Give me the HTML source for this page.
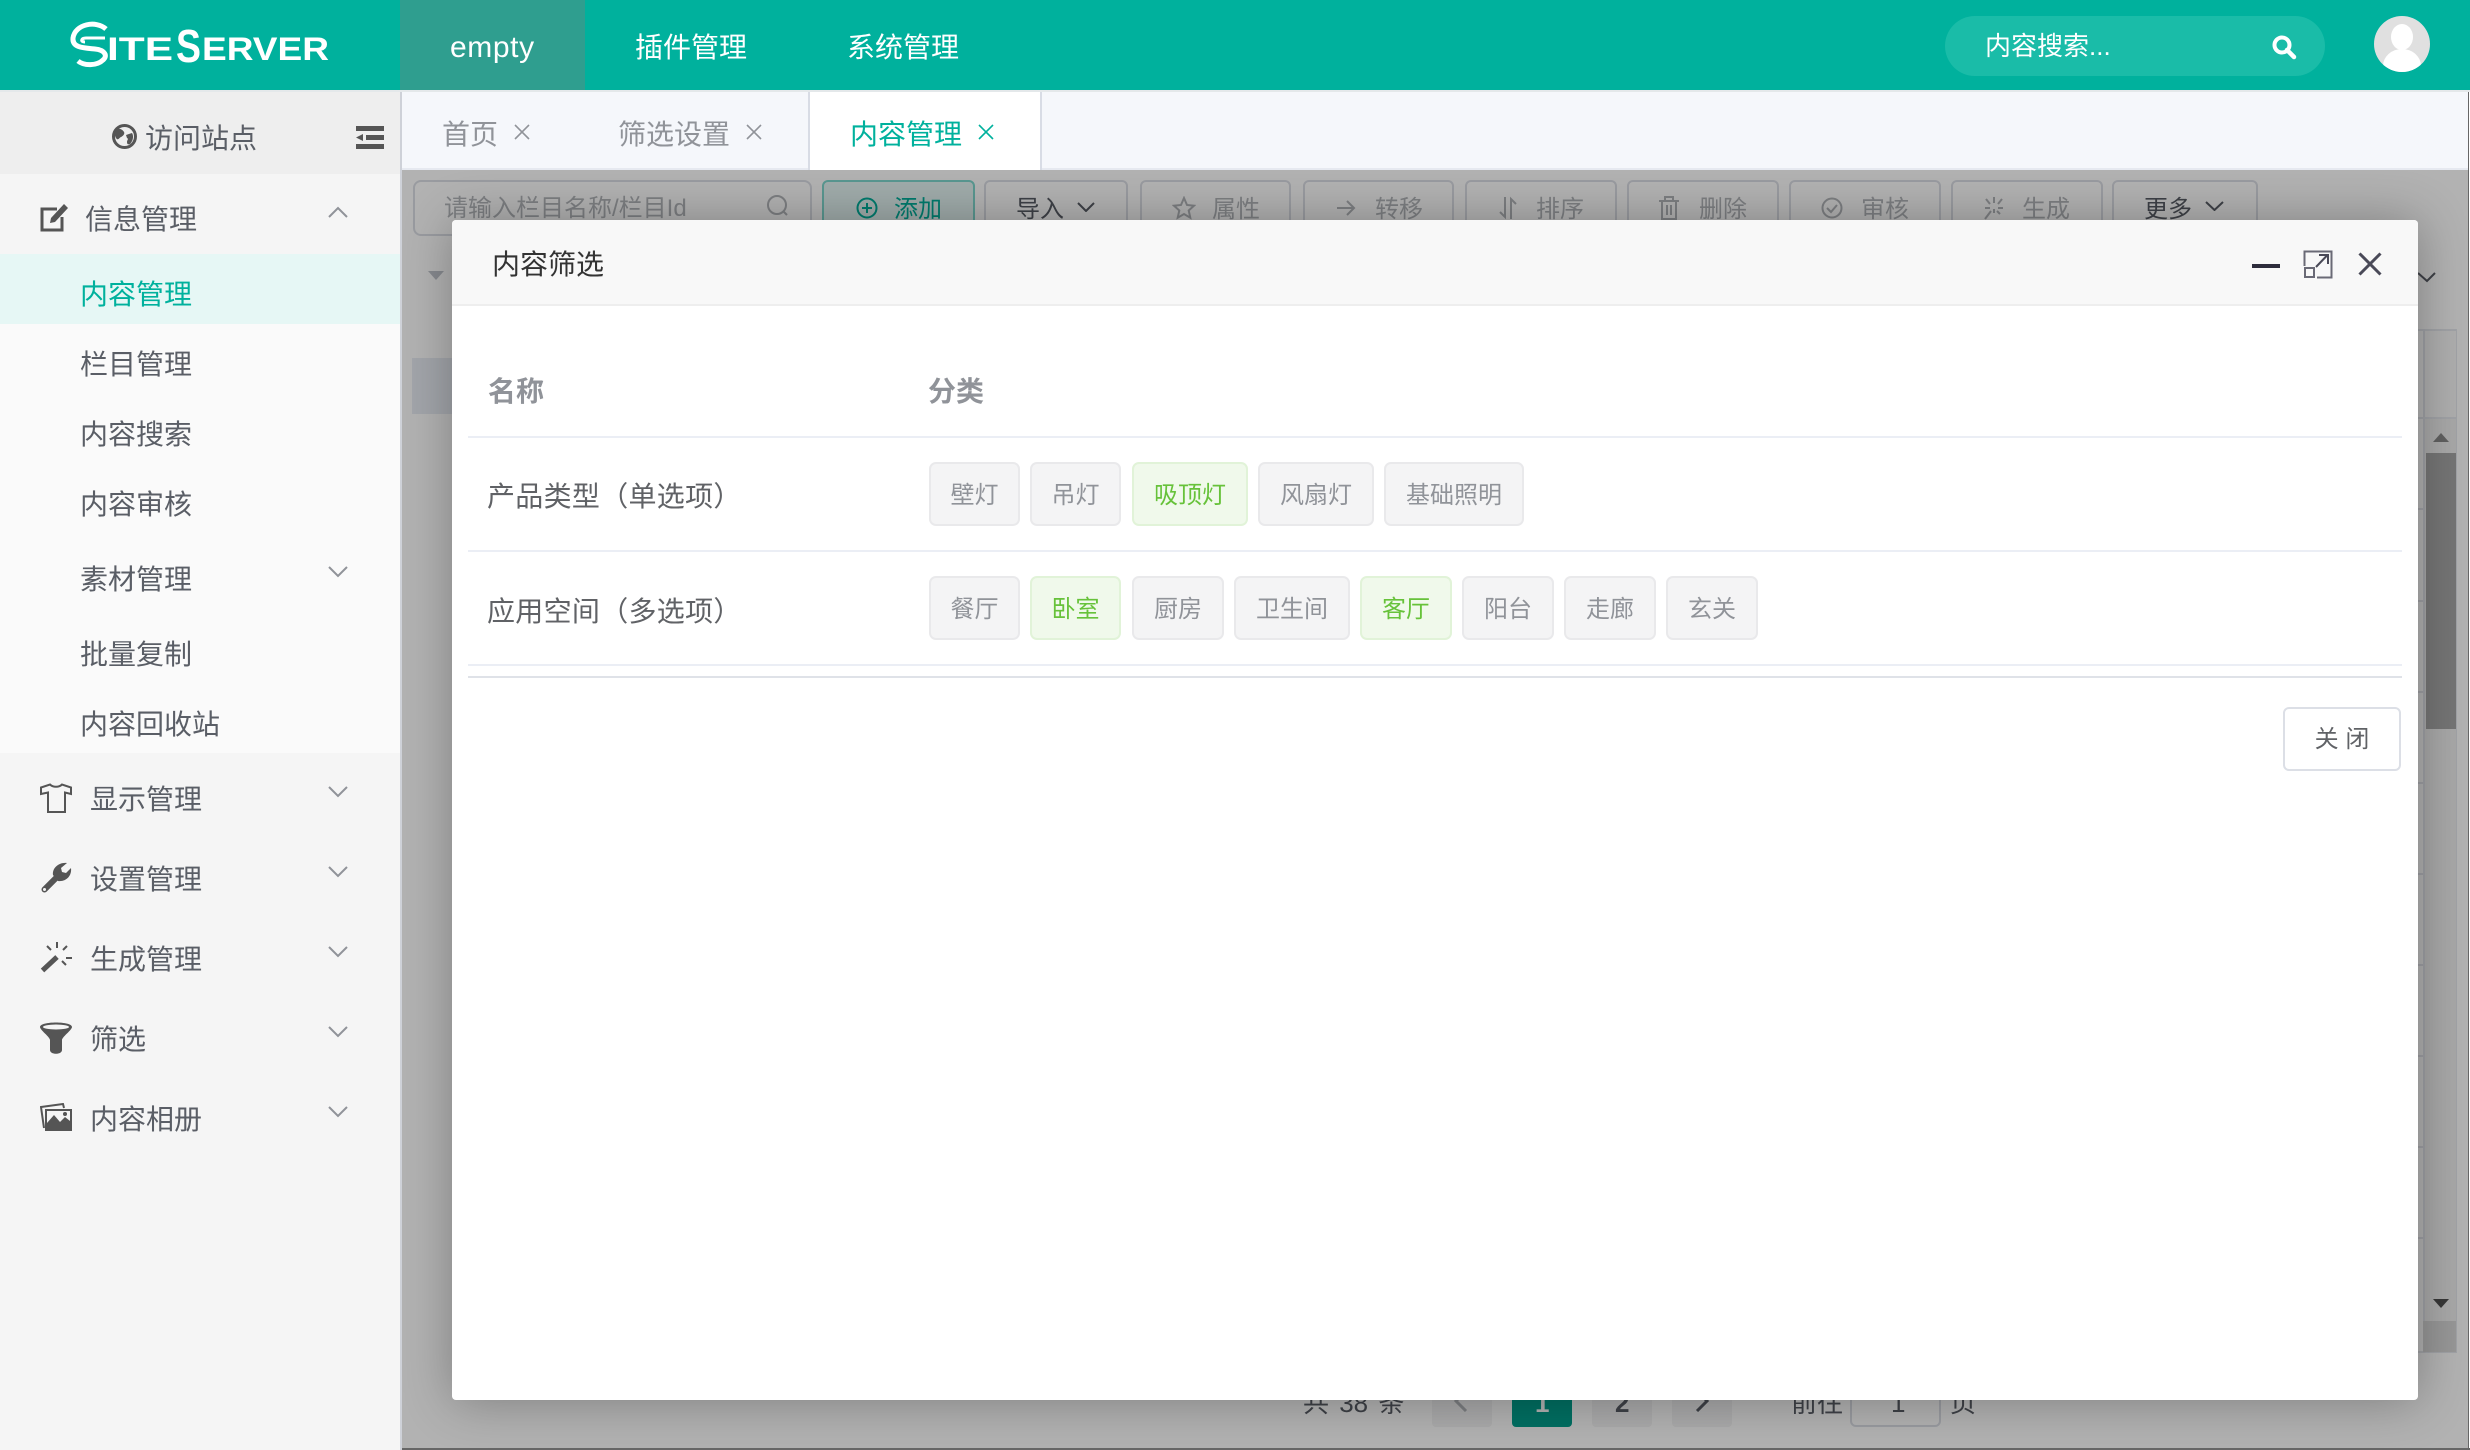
<!DOCTYPE html>
<html lang="zh">
<head>
<meta charset="utf-8">
<title>SiteServer</title>
<style>
html,body{margin:0;padding:0;width:2470px;height:1450px;overflow:hidden;background:#fff}
body{position:relative;font-family:"Liberation Sans","Noto Sans CJK SC",sans-serif;color:#5a5e66}
.b,.t,svg{position:absolute}
.b{box-sizing:border-box}
.t{white-space:nowrap;line-height:40px;font-size:28px;margin-top:2px}
.c{stroke:#909399;stroke-width:2;fill:none}
.tag{position:absolute;box-sizing:border-box;height:64px;background:#f4f4f5;border:2px solid #e9e9eb;border-radius:7px;color:#909399;font-size:24px;line-height:63px;text-align:center}
.tag.on{background:#f0f9eb;border-color:#e1f3d8;color:#67c23a}
.btn{position:absolute;box-sizing:border-box;top:180px;height:60px;border:2px solid #dcdfe6;border-radius:6px;background:#fff}
.s{font-size:24px;color:#b4b6bb}
</style>
</head>
<body>
<!-- underlying iframe content -->
<div class="b" style="left:0;top:0;width:2470px;height:1450px;clip-path:inset(170px 2px 2px 402px);background:#fff">
  <div class="b" style="left:413px;top:180px;width:399px;height:56px;border:2px solid #dcdfe6;border-radius:8px"></div>
  <div class="t" style="left:444px;top:187px;font-size:24px;color:#b4b6bb">请输入栏目名称/栏目Id</div>
  <svg style="left:766px;top:194px" width="24" height="24" viewBox="0 0 24 24"><circle cx="11" cy="11" r="9" fill="none" stroke="#b4b6bb" stroke-width="2"/><path d="M17 17l4 4" stroke="#b4b6bb" stroke-width="2"/></svg>
  <div class="btn" style="left:822px;width:153px;background:#e6f7f5;border-color:#80d8ce"></div>
  <svg style="left:856px;top:197px" width="22" height="22" viewBox="0 0 22 22"><circle cx="11" cy="11" r="9.500" fill="none" stroke="#00b19d" stroke-width="2"/><path d="M11 6v10M6 11h10" stroke="#00b19d" stroke-width="2"/></svg>
  <div class="t" style="left:894px;top:188px;font-size:24px;color:#00b19d">添加</div>
  <div class="btn" style="left:984px;width:144px"></div>
  <div class="t" style="left:1016px;top:188px;font-size:24px;color:#5a5e66">导入</div>
  <svg style="left:1077px;top:202px" width="18" height="10" viewBox="0 0 18 10"><path d="M1 1l8 8 8-8" fill="none" stroke="#5a5e66" stroke-width="2"/></svg>
  <div class="btn" style="left:1140px;width:151px"></div>
  <svg style="left:1172px;top:196px" width="24" height="24" viewBox="0 0 24 24"><path d="M12 2l3 7 7 .7-5.300 4.800 1.600 7.200L12 18l-6.300 3.700 1.600-7.200L2 9.700 9 9z" fill="none" stroke="#b4b6bb" stroke-width="2"/></svg>
  <div class="t s" style="left:1212px;top:188px">属性</div>
  <div class="btn" style="left:1303px;width:151px"></div>
  <svg style="left:1336px;top:198px" width="20" height="20" viewBox="0 0 20 20"><path d="M1 10h17M11 3l7 7-7 7" fill="none" stroke="#b4b6bb" stroke-width="2"/></svg>
  <div class="t s" style="left:1375px;top:188px">转移</div>
  <div class="btn" style="left:1465px;width:152px"></div>
  <svg style="left:1498px;top:196px" width="20" height="24" viewBox="0 0 20 24"><path d="M7 1v20L2 16M13 23V3l5 5" fill="none" stroke="#b4b6bb" stroke-width="2"/></svg>
  <div class="t s" style="left:1536px;top:188px">排序</div>
  <div class="btn" style="left:1627px;width:152px"></div>
  <svg style="left:1659px;top:196px" width="20" height="24" viewBox="0 0 20 24"><path d="M0 5h20M6 5V1h8v4M3 5v18h14V5M8 9v10M12 9v10" fill="none" stroke="#b4b6bb" stroke-width="2"/></svg>
  <div class="t s" style="left:1699px;top:188px">删除</div>
  <div class="btn" style="left:1789px;width:152px"></div>
  <svg style="left:1821px;top:197px" width="22" height="22" viewBox="0 0 22 22"><circle cx="11" cy="11" r="9.500" fill="none" stroke="#b4b6bb" stroke-width="2"/><path d="M6 11l4 4 6-7" fill="none" stroke="#b4b6bb" stroke-width="2"/></svg>
  <div class="t s" style="left:1861px;top:188px">审核</div>
  <div class="btn" style="left:1951px;width:152px"></div>
  <svg style="left:1983px;top:196px" width="22" height="24" viewBox="0 0 22 24"><path d="M11 1v6M11 13v4M3 3l4 5M19 3l-4 5M2 12h5M15 12h5M2 23l6-8M14 15l3 3" fill="none" stroke="#b4b6bb" stroke-width="2"/></svg>
  <div class="t s" style="left:2022px;top:188px">生成</div>
  <div class="btn" style="left:2112px;width:146px"></div>
  <div class="t" style="left:2144px;top:188px;font-size:24px;color:#5a5e66">更多</div>
  <svg style="left:2205px;top:201px" width="19" height="10" viewBox="0 0 19 10"><path d="M1 1l8.500 8 8.500-8" fill="none" stroke="#5a5e66" stroke-width="2"/></svg>

  <svg style="left:428px;top:271px" width="16" height="9" viewBox="0 0 16 9"><path d="M0 0h16L8 9z" fill="#c0c4cc"/></svg>
  <svg style="left:2418px;top:272px" width="18" height="11" viewBox="0 0 18 11"><path d="M0 1l9 8 8-8" fill="none" stroke="#5a5e66" stroke-width="2"/></svg>
  <div class="b" style="left:412px;top:358px;width:60px;height:56px;background:#e8ecf4"></div>

  <!-- table at right -->
  <div class="b" style="left:2400px;top:329px;width:57px;height:1024px;border:2px solid #e6e8ee;border-left:0"></div>
  <div class="b" style="left:2423px;top:329px;width:2px;height:1024px;background:#e4e6ec"></div>
  <div class="b" style="left:2400px;top:417px;width:57px;height:2px;background:#e6e8ee"></div>
  <div class="b" style="left:2425px;top:331px;width:31px;height:86px;background:#fafafa"></div>
  <div class="b" style="left:2425px;top:419px;width:31px;height:932px;background:#f1f1f1"></div>
  <svg style="left:2433px;top:433px" width="16" height="9" viewBox="0 0 16 9"><path d="M0 9h16L8 0z" fill="#8a8a8a"/></svg>
  <div class="b" style="left:2426px;top:453px;width:30px;height:276px;background:#a8a8a8"></div>
  <svg style="left:2433px;top:1299px" width="16" height="9" viewBox="0 0 16 9"><path d="M0 0h16L8 9z" fill="#505050"/></svg>
  <div class="b" style="left:2423px;top:1321px;width:33px;height:31px;background:#d8d8d8"></div>
  <div class="b" style="left:2418px;top:508px;width:5px;height:2px;background:#e4e6ec"></div>
  <div class="b" style="left:2418px;top:600px;width:5px;height:2px;background:#e4e6ec"></div>
  <div class="b" style="left:2418px;top:691px;width:5px;height:2px;background:#e4e6ec"></div>
  <div class="b" style="left:2418px;top:782px;width:5px;height:2px;background:#e4e6ec"></div>
  <div class="b" style="left:2418px;top:873px;width:5px;height:2px;background:#e4e6ec"></div>
  <div class="b" style="left:2418px;top:964px;width:5px;height:2px;background:#e4e6ec"></div>
  <div class="b" style="left:2418px;top:1055px;width:5px;height:2px;background:#e4e6ec"></div>
  <div class="b" style="left:2418px;top:1146px;width:5px;height:2px;background:#e4e6ec"></div>
  <div class="b" style="left:2418px;top:1237px;width:5px;height:2px;background:#e4e6ec"></div>

  <!-- pagination -->
  <div class="t" style="left:1303px;top:1381px;font-size:26px;color:#5a5e66;word-spacing:3px">共 38 条</div>
  <div class="b" style="left:1432px;top:1379px;width:60px;height:48px;background:#f4f4f5;border-radius:4px"></div>
  <svg style="left:1453px;top:1390px" width="16" height="22" viewBox="0 0 16 22"><path d="M13 1L3 11l10 10" fill="none" stroke="#b4b6bb" stroke-width="3"/></svg>
  <div class="b" style="left:1512px;top:1379px;width:60px;height:48px;background:#00a08d;border-radius:4px"></div>
  <div class="t" style="left:1535px;top:1381px;font-size:26px;font-weight:bold;color:#fff">1</div>
  <div class="b" style="left:1592px;top:1379px;width:60px;height:48px;background:#f4f4f5;border-radius:4px"></div>
  <div class="t" style="left:1615px;top:1381px;font-size:26px;font-weight:bold;color:#5a5e66">2</div>
  <div class="b" style="left:1672px;top:1379px;width:60px;height:48px;background:#f4f4f5;border-radius:4px"></div>
  <svg style="left:1694px;top:1390px" width="16" height="22" viewBox="0 0 16 22"><path d="M3 1l10 10L3 21" fill="none" stroke="#5a5e66" stroke-width="3"/></svg>
  <div class="t" style="left:1791px;top:1381px;font-size:26px;color:#5a5e66">前往</div>
  <div class="b" style="left:1850px;top:1379px;width:91px;height:48px;border:2px solid #dcdfe6;border-radius:6px"></div>
  <div class="t" style="left:1891px;top:1381px;font-size:26px;color:#5a5e66">1</div>
  <div class="t" style="left:1950px;top:1381px;font-size:26px;color:#5a5e66">页</div>

  <!-- overlay -->
  <div class="b" style="left:402px;top:170px;width:2068px;height:1280px;background:rgba(0,0,0,.3)"></div>

  <!-- modal -->
  <div class="b" style="left:452px;top:220px;width:1966px;height:1180px;background:#fff;border-radius:4px;box-shadow:1px 1px 50px rgba(0,0,0,.3)">
  </div>
  <div class="b" style="left:452px;top:220px;width:1966px;height:86px;background:#f8f8f8;border-bottom:2px solid #eee;border-radius:4px 4px 0 0"></div>
  <div class="t" style="left:492px;top:243px;color:#333">内容筛选</div>
  <div class="b" style="left:2252px;top:264px;width:28px;height:4px;background:#2e2d3c"></div>
  <svg style="left:2303px;top:250px" width="30" height="29" viewBox="0 0 30 29"><path d="M1.500 16V1.500H28.500V27.500H14" fill="none" stroke="#6a6a76" stroke-width="2"/><rect x="2" y="18" width="9" height="9" fill="none" stroke="#6a6a76" stroke-width="2"/><path d="M13 17L24 5.500M16 5h9v9" fill="none" stroke="#4a4a58" stroke-width="2"/></svg>
  <svg style="left:2358px;top:252px" width="24" height="24" viewBox="0 0 24 24"><path d="M1.500 1.500l21 21M22.500 1.500l-21 21" fill="none" stroke="#4a4a58" stroke-width="3"/></svg>

  <div class="t" style="left:488px;top:370px;font-weight:bold;color:#909399">名称</div>
  <div class="t" style="left:928px;top:370px;font-weight:bold;color:#909399">分类</div>
  <div class="b" style="left:468px;top:436px;width:1934px;height:2px;background:#ebeef5"></div>
  <div class="t" style="left:487px;top:475px;color:#606266;letter-spacing:.3px">产品类型（单选项）</div>
  <div class="tag" style="left:929px;top:462px;width:91px">壁灯</div>
  <div class="tag" style="left:1030px;top:462px;width:91px">吊灯</div>
  <div class="tag on" style="left:1132px;top:462px;width:116px">吸顶灯</div>
  <div class="tag" style="left:1258px;top:462px;width:116px">风扇灯</div>
  <div class="tag" style="left:1384px;top:462px;width:140px">基础照明</div>
  <div class="b" style="left:468px;top:550px;width:1934px;height:2px;background:#ebeef5"></div>
  <div class="t" style="left:487px;top:590px;color:#606266;letter-spacing:.3px">应用空间（多选项）</div>
  <div class="tag" style="left:929px;top:576px;width:91px">餐厅</div>
  <div class="tag on" style="left:1030px;top:576px;width:91px">卧室</div>
  <div class="tag" style="left:1132px;top:576px;width:92px">厨房</div>
  <div class="tag" style="left:1234px;top:576px;width:116px">卫生间</div>
  <div class="tag on" style="left:1360px;top:576px;width:92px">客厅</div>
  <div class="tag" style="left:1462px;top:576px;width:92px">阳台</div>
  <div class="tag" style="left:1564px;top:576px;width:92px">走廊</div>
  <div class="tag" style="left:1666px;top:576px;width:92px">玄关</div>
  <div class="b" style="left:468px;top:664px;width:1934px;height:2px;background:#ebeef5"></div>
  <div class="b" style="left:468px;top:676px;width:1934px;height:2px;background:#dfe2e8"></div>
  <div class="b" style="left:2283px;top:707px;width:118px;height:64px;border:2px solid #dcdfe6;border-radius:6px;font-size:24px;line-height:62px;text-align:center;color:#606266">关 闭</div>
</div>

<!-- right/bottom frame -->
<div class="b" style="left:2468px;top:92px;width:1px;height:1358px;background:#666"></div>
<div class="b" style="left:402px;top:1448px;width:2068px;height:2px;background:#666"></div>

<!-- header -->
<div class="b" style="left:0;top:0;width:2470px;height:90px;background:#00b19d"></div>
<div class="b" style="left:0;top:90px;width:2470px;height:2px;background:#e4e8ea"></div>
<svg style="left:68px;top:20px" width="44" height="50" viewBox="68 20 44 50"><path d="M106 29C96 20 75 24 73 38C72 48 84 48 95 49C105 50 108 56 103 60C97 66 84 66 78 61" fill="none" stroke="#fff" stroke-width="5"/><path d="M105 38L86 38C81 38 80 42 85 42" fill="none" stroke="#fff" stroke-width="3"/></svg>
<svg style="left:100px;top:20px" width="240" height="50" viewBox="100 20 240 50">
  <text x="107" y="60" font-family="Liberation Sans" font-weight="bold" font-size="32" fill="#fff" textLength="66" lengthAdjust="spacingAndGlyphs">ITE</text>
  <text x="176" y="62" font-family="Liberation Sans" font-weight="bold" font-size="46" fill="#fff" textLength="25" lengthAdjust="spacingAndGlyphs">S</text>
  <text x="202" y="60" font-family="Liberation Sans" font-weight="bold" font-size="32" fill="#fff" textLength="127" lengthAdjust="spacingAndGlyphs">ERVER</text>
</svg>
<div class="b" style="left:400px;top:0;width:185px;height:90px;background:#2f9e8f"></div>
<div class="t" style="left:450px;top:26px;color:#fff;font-size:30px;letter-spacing:.6px">empty</div>
<div class="t" style="left:635px;top:26px;color:#fff">插件管理</div>
<div class="t" style="left:847px;top:26px;color:#fff">系统管理</div>
<div class="b" style="left:1945px;top:16px;width:380px;height:60px;border-radius:30px;background:#1abca8"></div>
<div class="t" style="left:1985px;top:24px;font-size:26px;color:#fff">内容搜索...</div>
<svg style="left:2271px;top:34px" width="26" height="26" viewBox="0 0 26 26"><circle cx="11" cy="11" r="7.500" fill="none" stroke="#fff" stroke-width="4"/><path d="M16 16l7 7" stroke="#fff" stroke-width="4.500" stroke-linecap="round"/></svg>
<svg style="left:2374px;top:16px" width="56" height="56" viewBox="0 0 56 56"><defs><clipPath id="av"><circle cx="28" cy="28" r="28"/></clipPath></defs><circle cx="28" cy="28" r="28" fill="#e0e0e0"/><g clip-path="url(#av)" fill="#fff"><ellipse cx="28" cy="21" rx="11" ry="13"/><ellipse cx="28" cy="50" rx="19" ry="17"/></g></svg>

<!-- tabs -->
<div class="b" style="left:402px;top:92px;width:2066px;height:78px;background:#f5f7fb;border-bottom:2px solid #e6e9f0"></div>
<div class="b" style="left:808px;top:92px;width:234px;height:78px;background:#fff;border-left:2px solid #d8dce5;border-right:2px solid #d8dce5"></div>
<div class="t" style="left:442px;top:113px;color:#909399">首页</div>
<svg style="left:514px;top:124px" width="16" height="16" viewBox="0 0 16 16"><path d="M1 1l14 14M15 1L1 15" stroke="#909399" stroke-width="1.600" fill="none"/></svg>
<div class="t" style="left:618px;top:113px;color:#909399">筛选设置</div>
<svg style="left:746px;top:124px" width="16" height="16" viewBox="0 0 16 16"><path d="M1 1l14 14M15 1L1 15" stroke="#909399" stroke-width="1.600" fill="none"/></svg>
<div class="t" style="left:850px;top:113px;color:#00b19d">内容管理</div>
<svg style="left:978px;top:124px" width="16" height="16" viewBox="0 0 16 16"><path d="M1 1l14 14M15 1L1 15" stroke="#00b19d" stroke-width="1.600" fill="none"/></svg>

<!-- sidebar -->
<div class="b" style="left:0;top:92px;width:402px;height:1358px;background:#f5f5f5;border-right:2px solid #ced1d8"></div>
<div class="b" style="left:0;top:92px;width:400px;height:82px;background:#eee"></div>
<svg style="left:112px;top:124px" width="25" height="25" viewBox="0 0 25 25"><circle cx="12.500" cy="12.500" r="11" fill="#eee" stroke="#555" stroke-width="3"/><path d="M5 5c3-1 6 1 7 3s-1 4-3 5-3 4-5 1-1-6 1-9zM14 11l6-2c2 3 1 8-2 11-2 1-3 0-3-2s2-3 0-4z" fill="#555"/></svg>
<div class="t" style="left:145px;top:117px;color:#5a5e66">访问站点</div>
<svg style="left:356px;top:126px" width="28" height="23" viewBox="0 0 28 23"><path d="M0 0h28v5H0zM10 9h18v5H10zM0 18h28v5H0zM0 11.500L7 8v7z" fill="#555"/></svg>

<svg style="left:40px;top:203px" width="29" height="29" viewBox="0 0 29 29"><path d="M22 14v13H2V6h15" fill="none" stroke="#555" stroke-width="3"/><path d="M10 20l1-5L24 1l4 4L15 19z" fill="#555"/></svg>
<div class="t" style="left:85px;top:198px">信息管理</div>
<svg style="left:328px;top:206px" width="20" height="12" viewBox="0 0 20 12"><path class="c" d="M1 11l9-9 9 9"/></svg>

<div class="b" style="left:0;top:254px;width:400px;height:499px;background:#fafafa"></div>
<div class="b" style="left:0;top:254px;width:400px;height:70px;background:#e6f7f5"></div>
<div class="t" style="left:80px;top:273px;color:#00b19d">内容管理</div>
<div class="t" style="left:80px;top:343px">栏目管理</div>
<div class="t" style="left:80px;top:413px">内容搜索</div>
<div class="t" style="left:80px;top:483px">内容审核</div>
<div class="t" style="left:80px;top:558px">素材管理</div>
<svg style="left:328px;top:566px" width="20" height="12" viewBox="0 0 20 12"><path class="c" d="M1 1l9 9 9-9"/></svg>
<div class="t" style="left:80px;top:633px">批量复制</div>
<div class="t" style="left:80px;top:703px">内容回收站</div>

<svg style="left:40px;top:783px" width="32" height="30" viewBox="0 0 32 30"><path d="M10 1.500C13 4.500 19 4.500 22 1.500L31 4.500V11L25 9.500V29H8V9.500L1 11V4.500Z" fill="none" stroke="#555" stroke-width="2"/></svg>
<div class="t" style="left:90px;top:778px">显示管理</div>
<svg style="left:328px;top:786px" width="20" height="12" viewBox="0 0 20 12"><path class="c" d="M1 1l9 9 9-9"/></svg>

<svg style="left:40px;top:862px" width="32" height="32" viewBox="0 0 32 32"><path d="M4.500 27.500L18 14" stroke="#555" stroke-width="6" stroke-linecap="round" fill="none"/><path d="M13 13C12 6 19 0 27 1L21 6l1 4 4 1 5-5c1 8-5 14-13 13z" fill="#555"/><circle cx="4.500" cy="27.500" r="1.500" fill="#f5f5f5"/></svg>
<div class="t" style="left:90px;top:858px">设置管理</div>
<svg style="left:328px;top:866px" width="20" height="12" viewBox="0 0 20 12"><path class="c" d="M1 1l9 9 9-9"/></svg>

<svg style="left:40px;top:942px" width="32" height="31" viewBox="0 0 32 31"><path d="M2.500 28.500L17 15" stroke="#555" stroke-width="5" fill="none"/><path d="M17 0v6M7 4l4 4M27 4l-4 4M26 16h6M26 23l-4-4" stroke="#555" stroke-width="2" fill="none"/></svg>
<div class="t" style="left:90px;top:938px">生成管理</div>
<svg style="left:328px;top:946px" width="20" height="12" viewBox="0 0 20 12"><path class="c" d="M1 1l9 9 9-9"/></svg>

<svg style="left:40px;top:1022px" width="32" height="32" viewBox="0 0 32 32"><path d="M0 5C0-1 32-1 32 5 32 8 22 15 22 18V28C22 33 10 33 10 28V18C10 15 0 8 0 5Z" fill="#555"/><ellipse cx="16" cy="5" rx="13" ry="2.500" fill="#f5f5f5"/></svg>
<div class="t" style="left:90px;top:1018px">筛选</div>
<svg style="left:328px;top:1026px" width="20" height="12" viewBox="0 0 20 12"><path class="c" d="M1 1l9 9 9-9"/></svg>

<svg style="left:40px;top:1103px" width="32" height="28" viewBox="0 0 32 28"><path d="M4 25L1 4l22-3 1 4" fill="none" stroke="#555" stroke-width="2"/><path d="M5 6h27v22H5z" fill="#555"/><path d="M7 8h23v10l-5-4-5 5-6-7-7 8z" fill="#f5f5f5"/><circle cx="25" cy="11" r="2" fill="#555"/></svg>
<div class="t" style="left:90px;top:1098px">内容相册</div>
<svg style="left:328px;top:1106px" width="20" height="12" viewBox="0 0 20 12"><path class="c" d="M1 1l9 9 9-9"/></svg>
</body>
</html>
